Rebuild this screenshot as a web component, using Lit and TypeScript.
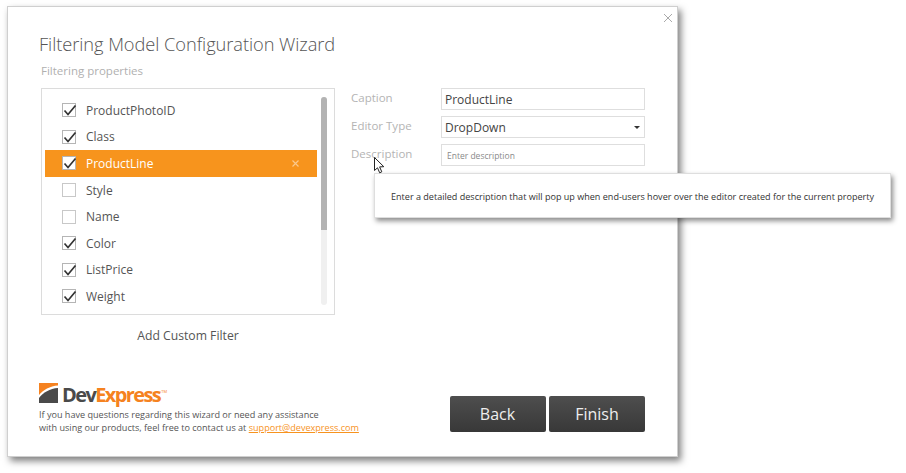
import { LitElement, html, css, svg } from "lit";
import { customElement } from "lit/decorators.js";

const FIELDS = [
  { name: "ProductPhotoID", on: true },
  { name: "Class", on: true },
  { name: "ProductLine", on: true, sel: true },
  { name: "Style", on: false },
  { name: "Name", on: false },
  { name: "Color", on: true },
  { name: "ListPrice", on: true },
  { name: "Weight", on: true },
];

const check = svg`<svg class="tick" width="14" height="14" viewBox="0 0 14 14"><path d="M1.5 7.5 L5 11.5 L12.5 2.5" fill="none" stroke="currentColor" stroke-width="1.7"/></svg>`;

@customElement("app-root")
export class AppRoot extends LitElement {
  static styles = css`
    :host { display: block; position: relative; width: 906px; height: 473px; background: #fff; overflow: hidden;
      font-family: "Open Sans", "Noto Sans", sans-serif; color: #555; }
    .dialog { position: relative; box-sizing: border-box; width: 671px; height: 451px; margin: 6px 0 0 7px; background: #fff;
      border: 1px solid #cfcfcf; box-shadow: 3px 4px 7px rgba(0,0,0,.5); padding: 24px 32px 0 32px; display: flex; flex-direction: column; }
    .close { position: absolute; right: 4px; top: 6px; width: 10px; height: 10px; color: #aaa; }
    .title { margin: 0 0 0 -1px; font-size: 18.25px; font-weight: 300; line-height: 26px; color: #555; letter-spacing: -.06px; }
    .sub { font-size: 11.5px; line-height: 16px; color: #b0b0b0; margin: 6px 0 0 1px; }
    .main { display: flex; margin: 9px 0 0 1px; gap: 16px; }
    .left { width: 294px; flex: none; display: flex; flex-direction: column; }
    .list { box-sizing: border-box; height: 227px; border: 1px solid #dcdcdc; padding: 8px 3px 0 3px; display: flex; gap: 4px; }
    .rows { flex: 1; display: flex; flex-direction: column; margin-top: 0; }
    .row { height: 26.6px; display: flex; align-items: center; padding-left: 17px; font-size: 12px; color: #555; }
    .row.sel { background: #f7941d; color: #fff; position: relative; }
    .box { box-sizing: border-box; width: 14px; height: 14px; border: 1px solid #c8c8c8; background: #fff; color: #333; margin-right: 10px; flex: none; position: relative; }
    .box.on { border-color: #b5b5b5; }
    .tick { position: absolute; left: 0; top: -1px; }
    .x { position: absolute; right: 18px; top: 10px; color: #fbc88c; width: 7px; height: 7px; }
    .scroll { width: 6px; height: 208px; margin-top: 0; background: #f0f0f0; border-radius: 3px; flex: none; margin-right: 4px; }
    .thumb { height: 133px; background: #b3b3b3; border-radius: 3px 3px 0 0; }
    .add { text-align: center; font-size: 12.2px; line-height: 16px; margin-top: 13px; color: #555; }
    .right { flex: 1; display: flex; flex-direction: column; gap: 6px; }
    .field { display: flex; height: 22px; }
    .lab { width: 90px; flex: none; font-size: 11.5px; color: #b4b4b4; line-height: 19px; }
    .inp { box-sizing: border-box; width: 204px; height: 22px; border: 1px solid #dedede; padding-left: 3px; font-size: 12px; color: #444; line-height: 21px; position: relative; }
    .ph { font-size: 8.5px; color: #8a8a8a; padding-left: 5px; }
    .arrow { position: absolute; right: 4px; top: 9px; width: 0; height: 0; border: 3px solid transparent; border-top: 3px solid #333; border-bottom: 0; }
    .foot { display: flex; justify-content: space-between; align-items: flex-end; margin: 37px 0 0 -1px; }
    .logo { display: flex; align-items: center; gap: 4px; height: 24px; }
    .brand { font-family: "Open Sans", sans-serif; font-weight: 700; font-size: 20px; letter-spacing: -1.6px; line-height: 24px; color: #4a4a4a; }
    .brand span { color: #f58220; }
    .brand sup { font-size: 4px; color: #f58220; vertical-align: 9px; font-weight: 400; letter-spacing: 0; margin-left: 1px; }
    .info { font-size: 9.1px; line-height: 13px; color: #555; margin-top: 3px; letter-spacing: -.01px; }
    .info a { color: #f7931e; text-decoration: underline; }
    .btns { display: flex; gap: 3.5px; margin-bottom: 2px; }
    .btn { width: 96px; height: 36px; border-radius: 2px; background: linear-gradient(#4e4e4e, #383838); color: #eee; font-size: 16px; display: flex; align-items: center; justify-content: center; }
    .tip { position: absolute; left: 374px; top: 173px; box-sizing: border-box; width: 517px; height: 45px; background: #fff; border: 1px solid #dedede;
      box-shadow: 2px 3px 5px rgba(0,0,0,.45); font-size: 9.06px; color: #333; display: flex; align-items: center; padding: 1px 0 0 16px; white-space: nowrap; }
    .cursor { position: absolute; left: 374px; top: 157px; }
  `;

  render() {
    return html`
      <div class="dialog">
        <svg class="close" viewBox="0 0 10 10"><path d="M1 1 L9 9 M9 1 L1 9" stroke="currentColor" stroke-width="1" fill="none"/></svg>
        <h1 class="title">Filtering Model Configuration Wizard</h1>
        <div class="sub">Filtering properties</div>
        <div class="main">
          <div class="left">
            <div class="list">
              <div class="rows">
                ${FIELDS.map(f => html`
                  <div class="row ${f.sel ? "sel" : ""}">
                    <span class="box ${f.on ? "on" : ""}">${f.on ? check : ""}</span>${f.name}
                    ${f.sel ? html`<svg class="x" viewBox="0 0 7 7"><path d="M.5 .5 L6.5 6.5 M6.5 .5 L.5 6.5" stroke="currentColor" stroke-width="1.2"/></svg>` : ""}
                  </div>`)}
              </div>
              <div class="scroll"><div class="thumb"></div></div>
            </div>
            <div class="add">Add Custom Filter</div>
          </div>
          <div class="right">
            <div class="field"><div class="lab">Caption</div><div class="inp">ProductLine</div></div>
            <div class="field"><div class="lab">Editor Type</div><div class="inp">DropDown<span class="arrow"></span></div></div>
            <div class="field"><div class="lab">Description</div><div class="inp ph">Enter description</div></div>
          </div>
        </div>
        <div class="foot">
          <div>
            <div class="logo">
              <svg width="19" height="20" viewBox="0 0 19 20">
                <path d="M0 0 H19 V2.5 C11 3 4 7 0 12 Z" fill="#f58220"/>
                <path d="M0 20 V15 C4 9.5 11 5.5 19 5 V20 Z" fill="#4a4a4a"/>
              </svg>
              <div class="brand">Dev<span>Express</span><sup>TM</sup></div>
            </div>
            <div class="info">If you have questions regarding this wizard or need any assistance<br>with using our products, feel free to contact us at <a>support@devexpress.com</a></div>
          </div>
          <div class="btns"><div class="btn">Back</div><div class="btn">Finish</div></div>
        </div>
      </div>
      <div class="tip">Enter a detailed description that will pop up when end-users hover over the editor created for the current property</div>
      <svg class="cursor" width="12" height="17" viewBox="0 0 12 17"><path d="M.5 .5 V13.5 L3.5 10.8 L5.7 15.8 L7.8 14.8 L5.6 9.9 L9.8 9.7 Z" fill="#fff" stroke="#222" stroke-width="1"/></svg>
    `;
  }
}
